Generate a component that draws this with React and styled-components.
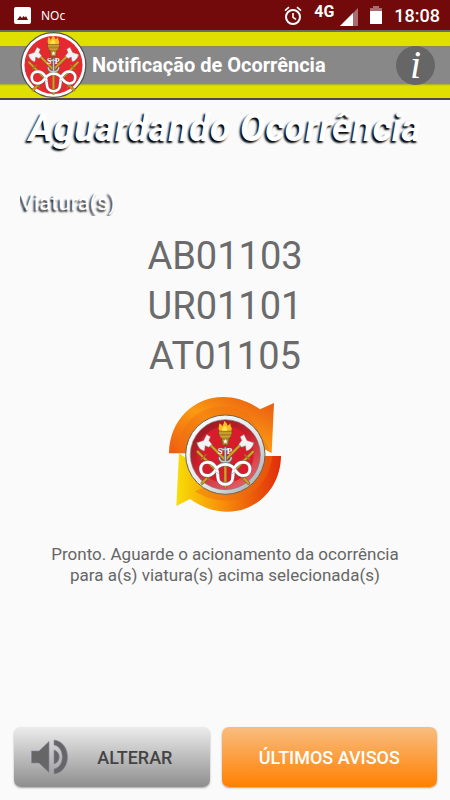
import React from 'react';
import styled, { createGlobalStyle, css } from 'styled-components';

const GlobalStyle = createGlobalStyle`
	* {
		box-sizing: border-box;
	}

	body {
		margin: 0;
		background: #fafafa;
		font-family: Roboto, sans-serif;
	}
`;

const Page = styled.div`
	display: flex;
	flex-direction: column;
	min-height: 100vh;
`;

const StatusBar = styled.div`
	display: flex;
	align-items: center;
	height: 30px;
	padding: 0 10px 0 14px;
	background: #720a0c;
	color: #fff;
`;

const Carrier = styled.span`
	flex: 1;
	margin-left: 10px;
	font: 12px 'Noto Sans', sans-serif;
`;

const StatusIcons = styled.div`
	display: flex;
	align-items: center;
	gap: 12px;
`;

const Signal = styled.div`
	display: flex;
	gap: 6px;
	height: 20px;
	font-size: 16px;
	font-weight: 700;
	line-height: 14px;

	svg {
		margin-top: 3px;
	}
`;

const Clock = styled.span`
	font-size: 18px;
	font-weight: 500;
`;

const Header = styled.header`
	display: flex;
	align-items: center;
	height: 70px;
	padding: 0 15px 0 20px;
	border-top: 2px solid #6b6b6b;
	border-bottom: 2px solid #4a4a4a;
	background: linear-gradient(#e0e000 14px, #8a8a50 14px, #888 16px, #888 52px, #a5a53c 52px, #e0e000 54px);

	h1 {
		flex: 1;
		margin: 0 0 0 5px;
		color: #fff;
		font-size: 20px;
		font-weight: 700;
		white-space: nowrap;
	}
`;

const InfoButton = styled.button`
	width: 39px;
	height: 39px;
	padding: 0;
	border: 0;
	border-radius: 50%;
	background: #666;
	color: #fff;
	font: italic 40px/36px 'Liberation Serif', serif;
	cursor: pointer;
`;

const Main = styled.main`
	flex: 1;
	display: flex;
	flex-direction: column;
	align-items: center;
	padding: 4px 20px 0;
`;

const Title = styled.h2`
	margin: 0;
	color: #fff;
	font-size: 38px;
	font-style: italic;
	font-weight: 700;
	line-height: 48px;
	text-shadow: -2px 2px 2px #000;
	white-space: nowrap;
`;

const Label = styled.h3`
	align-self: flex-start;
	margin: 38px 0 15px;
	overflow: hidden;
	color: #fff;
	font-size: 22px;
	font-weight: 400;
	line-height: 26px;
	text-shadow: -2px 2px 2px #222;
`;

const Vehicles = styled.ul`
	margin: 0;
	padding: 0;
	list-style: none;
	color: #6b6b6b;
	font-size: 38px;
	line-height: 50px;
	text-align: center;
`;

const Sync = styled.svg`
	display: block;
	width: 112px;
	height: 116px;
	margin: 16px 0 31px;
`;

const Message = styled.p`
	max-width: 370px;
	margin: 0;
	color: #666;
	font-size: 17px;
	line-height: 21px;
	text-align: center;
`;

const Footer = styled.footer`
	display: grid;
	grid-template-columns: 10fr 11fr;
	gap: 12px;
	padding: 12px 13px 13px 14px;
`;

const ActionButton = styled.button`
	display: flex;
	align-items: center;
	justify-content: center;
	height: 60px;
	padding: 0;
	border: 0;
	border-radius: 7px;
	box-shadow: 0 1px 2px rgba(0, 0, 0, 0.35);
	font: 500 18px Roboto, sans-serif;
	cursor: pointer;

	${({ $primary }) =>
		$primary
			? css`
					background: linear-gradient(#f9bd80, #ff8000);
					color: #fff;
			  `
			: css`
					gap: 29px;
					padding-right: 20px;
					background: linear-gradient(#ececec, #8e8e8e);
					color: #444;
			  `}
`;

const PictureIcon = () => (
	<svg width="17" height="17" viewBox="0 0 17 17">
		<rect width="17" height="17" rx="2" fill="#fff" />
		<path d="M3 13l3-4 2 2 1.500-2 1.500 1.500L12 9l2 4z" fill="#720a0c" />
	</svg>
);

const AlarmIcon = () => (
	<svg width="18" height="19" viewBox="0 0 18 19" fill="none" stroke="#fff" strokeWidth="2">
		<circle cx="9" cy="11" r="7" />
		<path d="M9 7v4.4l3 2M1 4.6L5 1.2M17 4.6L13 1.2" strokeWidth="1.6" />
	</svg>
);

const SignalIcon = () => (
	<svg width="18" height="18" viewBox="0 0 18 18">
		<path d="M18 0v18H0z" fill="#aa6c6d" />
		<path d="M13 5v13H0z" fill="#fff" />
	</svg>
);

const BatteryIcon = () => (
	<svg width="12" height="18" viewBox="0 0 12 18">
		<path d="M3 0h6v2h3v4H0V2h3z" fill="#aa6c6d" />
		<path d="M0 5h12v13H0z" fill="#fff" />
	</svg>
);

const SpeakerIcon = () => (
	<svg width="37" height="36" viewBox="0 0 37 36" fill="#666" stroke="#8886a0" strokeWidth="0.6">
		<path d="M.5 12H8l10-9.500v31L8 24H.5z" />
		<path d="M23 11c7 2 7 12 0 14z" />
		<path d="M23 1c18 2 18 32 0 34v-5c11-2 11-22 0-24z" />
	</svg>
);

const rods = 'M27 34L81 88M73 34L19 88M13 46L40 73M87 46L60 73M50 60V93';
const anchor = 'M50 41v19M46 43h8M42 54c1 8 15 8 16 0';
const rope =
	'M50 63C58 63 61 67 64 72C67 76 70 78 74 78C86 78 86 60 74 60C64 60 60 70 60 80C60 93 40 93 40 80C40 70 36 60 26 60C14 60 14 78 26 78C30 78 33 76 36 72C39 67 42 63 50 63Z';

// crossed axes, torch, anchor and rope, drawn on a 100 x 100 field
const Emblem = () => (
	<g fill="none" strokeLinecap="round">
		<path d={rods} stroke="#7b5a16" strokeWidth="4.2" />
		<path d={rods} stroke="#d0a02a" strokeWidth="3" />
		<path d="M18 56l6-6M82 56l-6-6M24 79l5 5M76 79l-5 5M46 87h8" stroke="#9c751e" strokeWidth="2" />
		<g fill="#f3f3f3" stroke="#888" strokeWidth="0.7">
			<path d="M12 34l9-3 4-8 5 3-2 5 4 5-4 4-5-2-1 7c-5-1-9-5-10-11z" />
			<path d="M88 34l-9-3-4-8-5 3 2 5-4 5 4 4 5-2 1 7c5-1 9-5 10-11z" />
		</g>
		<path d="M41 18h18l-1 7-3 3-1 9h-8l-1-9-3-3z" fill="#b08426" stroke="#654a15" strokeWidth="0.8" />
		<path d="M42 21h16M44 26h12" stroke="#dfb338" strokeWidth="1.3" />
		<path d="M42 18c-2-4 0-7 0-10 3 1 3 3 4 4 1-3 3-4 2-7 4 2 4 4 5 6 2 0 2-2 4-3-1 4 3 6 1 10z" fill="#f6bd20" />
		<path d="M46 18c-2-3 2-4 3-7 3 3 5 5 3 7z" fill="#ffe24a" />
		<path d="M50 29l1 2h2l-1.500 2 .5 2-2-1-2 1 .5-2-1.500-2h2z" fill="#fff" />
		<path d={anchor} stroke="#60656b" strokeWidth="3.8" />
		<path d={anchor} stroke="#c5c9cc" strokeWidth="2" />
		<g fill="#fff" fontFamily="Liberation Serif, serif" fontSize="12" fontWeight="700">
			<text x="40" y="49">S</text>
			<text x="52" y="49">P</text>
		</g>
		<path d={rope} stroke="#666" strokeWidth="5" />
		<path d={rope} stroke="#fff" strokeWidth="4" />
		<path d="M33 66l5 4M67 66l-5 4M37 73l5 3M63 73l-5 3" stroke="#777" strokeWidth="0.6" />
	</g>
);

const Badge = () => (
	<svg width="67" height="66" viewBox="0 0 100 100" role="img" aria-label="Bombeiros SP">
		<circle cx="50" cy="50" r="49" fill="#fff" stroke="#555" strokeWidth="2" />
		<circle cx="50" cy="50" r="44" fill="#e5292e" />
		<Emblem />
	</svg>
);

const SyncBadge = () => (
	<Sync viewBox="42 35 336 348">
		<defs>
			<linearGradient id="top" x1="0" y1="1" x2="1" y2="0">
				<stop offset="0" stopColor="#ee5a10" />
				<stop offset="0.5" stopColor="#fb9a12" />
				<stop offset="1" stopColor="#e85412" />
			</linearGradient>
			<linearGradient id="bottom">
				<stop offset="0" stopColor="#f8de06" />
				<stop offset="0.45" stopColor="#f78d0a" />
				<stop offset="1" stopColor="#e02c0a" />
			</linearGradient>
			<linearGradient id="rim" x1="0" y1="0" x2="1" y2="1">
				<stop offset="0" stopColor="#fff" />
				<stop offset="0.6" stopColor="#e2e4e6" />
				<stop offset="1" stopColor="#9b9da0" />
			</linearGradient>
			<linearGradient id="dish" x1="0" y1="0" x2="0.6" y2="1">
				<stop offset="0" stopColor="#8e1820" />
				<stop offset="0.5" stopColor="#c41f2b" />
				<stop offset="1" stopColor="#e65a62" />
			</linearGradient>
		</defs>
		<path d="M42 204C44 62 190-15 315 72L357 53 350 203 280 165 140 165 92 204z" fill="url(#top)" />
		<path d="M68 204C72 82 185 30 282 88L350 203 280 165 140 165 92 204z" fill="#ef7010" opacity="0.45" />
		<path d="M378 212C376 350 232 432 105 341L64 362 72 204 140 250 280 250 330 212z" fill="url(#bottom)" />
		<path d="M352 212C340 330 220 382 120 318L280 250 330 212z" fill="#ee6a10" opacity="0.45" />
		<circle cx="211" cy="208" r="119" fill="url(#rim)" stroke="#6b6550" strokeWidth="3" />
		<circle cx="211" cy="208" r="105" fill="url(#dish)" stroke="#777" strokeWidth="2" />
		<circle cx="211" cy="208" r="85" fill="#d91c2c" />
		<g transform="translate(99 96) scale(2.240)">
			<Emblem />
		</g>
	</Sync>
);

const vehicles = ['AB01103', 'UR01101', 'AT01105'];

export default function App() {
	return (
		<Page>
			<GlobalStyle />
			<StatusBar>
				<PictureIcon />
				<Carrier>NOc</Carrier>
				<StatusIcons>
					<AlarmIcon />
					<Signal>
						4G
						<SignalIcon />
					</Signal>
					<BatteryIcon />
					<Clock>18:08</Clock>
				</StatusIcons>
			</StatusBar>
			<Header>
				<Badge />
				<h1>Notificação de Ocorrência</h1>
				<InfoButton type="button">i</InfoButton>
			</Header>
			<Main>
				<Title>Aguardando Ocorrência</Title>
				<Label>Viatura(s)</Label>
				<Vehicles>
					{vehicles.map(name => (
						<li key={name}>{name}</li>
					))}
				</Vehicles>
				<SyncBadge />
				<Message>Pronto. Aguarde o acionamento da ocorrência para a(s) viatura(s) acima selecionada(s)</Message>
			</Main>
			<Footer>
				<ActionButton type="button">
					<SpeakerIcon />
					ALTERAR
				</ActionButton>
				<ActionButton type="button" $primary>
					ÚLTIMOS AVISOS
				</ActionButton>
			</Footer>
		</Page>
	);
}
